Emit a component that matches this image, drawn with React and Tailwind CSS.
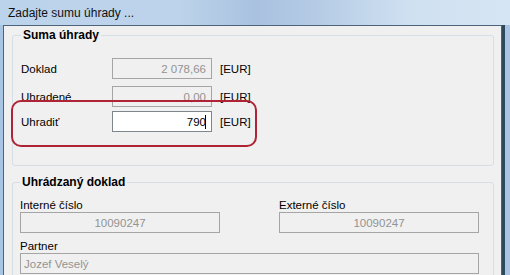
const font = { fontFamily: '"Liberation Sans", Arial, sans-serif' }

function Box({ value, align = 'right', white = false, className = '' }) {
	const tone = white
		? 'bg-white border-[#7f858c] text-black'
		: 'bg-[#f0f0f0] border-[#a5a5a5] text-[#939393]'
	const just = align === 'right' ? 'justify-end pr-[5px]' : align === 'center' ? 'justify-center' : 'justify-start pl-[3px]'
	return (
		<div className={`h-[21px] border flex items-center ${tone} ${just} ${className}`}>
			<span>{value}</span>
			{white && <span className="w-px h-[14px] bg-black -ml-px" />}
		</div>
	)
}

function Row({ label, value, white, className = '' }) {
	return (
		<div className={`flex items-center ${className}`}>
			<div className="w-[91px]">{label}</div>
			<Box value={value} white={white} className="w-[100px]" />
			<div className="ml-[8px]">[EUR]</div>
		</div>
	)
}

export default function App() {
	return (
		<div
			className="relative w-[510px] h-[275px] overflow-hidden flex flex-col text-[11.5px] leading-[14px] text-black bg-[linear-gradient(90deg,#bcd3ec_0%,#bdd3eb_35%,#a9c2df_50%,#b5cbe5_62%,#cfe0f1_80%,#d6e5f3_100%)]"
			style={font}
		>
			<div className="h-[25px] shrink-0 flex items-center pl-[8px] pt-[1px] text-[12px] text-[#111]">
				Zadajte sumu úhrady ...
			</div>
			<div className="flex-1 min-h-0 flex">
				<div className="w-[3px] bg-[#a9c5e5]" />
				<div className="flex-1 bg-[#f0f0f0] border-t border-l border-r border-[#4d637b] pl-[8px] pr-[7px] pt-[2px]">
					<fieldset className="border border-[#d5dfe5] rounded-[3px] px-[8px] pb-[33px]">
						<legend className="px-[2px] font-bold text-[12px] leading-[14px]">Suma úhrady</legend>
						<Row label="Doklad" value="2 078,66" className="mt-[16px]" />
						<Row label="Uhradené" value="0,00" className="mt-[7px]" />
						<Row label="Uhradiť" value="790" white className="mt-[4px]" />
					</fieldset>
					<fieldset className="mt-[9px] border border-[#d5dfe5] rounded-[3px] pl-[7px] pr-[14px] pb-[20px]">
						<legend className="px-[2px] font-bold text-[12px] leading-[14px]">Uhrádzaný doklad</legend>
						<div className="grid grid-cols-[200px_200px] gap-x-[59px] mt-[9px]">
							<div>
								<div className="leading-[14px]">Interné číslo</div>
								<Box value="10090247" align="center" />
							</div>
							<div>
								<div className="leading-[14px]">Externé číslo</div>
								<Box value="10090247" align="center" />
							</div>
							<div className="col-span-2 mt-[6px]">
								<div className="leading-[14px]">Partner</div>
								<Box value="Jozef Veselý" align="left" />
							</div>
						</div>
					</fieldset>
				</div>
				<div className="w-[3px] bg-[#2c4a5c]" />
				<div className="w-[5px] bg-[#aac5e4]" />
			</div>
			<div className="absolute left-[11px] top-[100px] w-[246px] h-[47px] border-2 border-[#ae2436] rounded-[10px]" />
		</div>
	)
}
